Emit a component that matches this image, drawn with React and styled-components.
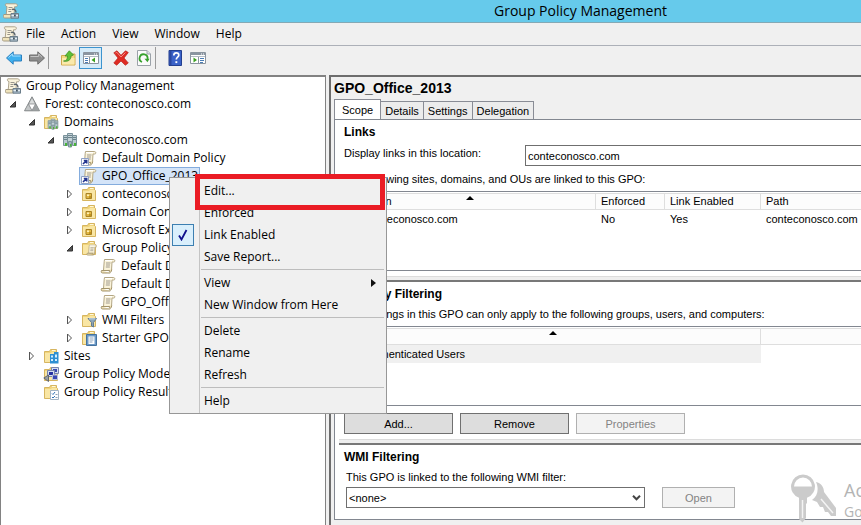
import React from 'react';
import styled, { createGlobalStyle } from 'styled-components';

const GlobalStyle = createGlobalStyle`
  * { box-sizing: border-box; }
  body { margin: 0; background: #f0f0f0; overflow: hidden; }
  button, select { font: inherit; color: inherit; margin: 0; }
`;

const ui = `"Open Sans", "Noto Sans", sans-serif`;
const classic = `"Liberation Sans", Arial, sans-serif`;

/* ---------- icons ---------- */

const Icon = ({ children, size = 16 }) => (
  <svg width={size} height={size} viewBox="0 0 16 16" aria-hidden="true">{children}</svg>
);

const scrollShape = (
  <>
    <path d="M4.500 1.500h9c1.600 0 1.800 2.500.2 2.500h-1.700l-.5 8.500H3.500l.7-9z" fill="#faf3da" stroke="#b3a684" />
    <path d="M1.500 12.500h8c-.5 2 1 2.500 1.800.8l.4-1.800M1.500 12.500c-.8 2 .2 2.500 1.200 2.500h7.500" fill="#efe0b4" stroke="#a3946c" />
    <path d="M6 5h4.500M6 7h4M5.800 9h4" stroke="#a19b90" />
    <path d="M5 2.500h7" stroke="#fff" />
  </>
);

const folderShape = (
  <>
    <path d="M1.500 3.500h5l1-2h6v3h1v10h-13z" fill="#f0d47c" stroke="#d6b560" />
    <path d="M2 5h6l1-1h5v10H2z" fill="#f9e6a4" />
    <path d="M9 2.500h3.500" stroke="#fff8dc" />
  </>
);

const ScrollIcon = () => <Icon>{scrollShape}</Icon>;

const ConsoleIcon = () => (
  <Icon>
    <path d="M2.800.8h10c2 0 2 3 .2 3h-1.500l-.5 8H3.200l.8-8.300C2.300 3.500 2 1.500 2.800.8z" fill="#faf3dc" stroke="#a49a82" strokeWidth=".9" />
    <path d="M5.500 4.500h4M5.500 6.500h3M5.300 8.500h3" stroke="#99958c" />
    <path d="M.8 11.500h7.500v3.500h-7c-1-.5-1-2.500-.5-3.500z" fill="#efe3bb" stroke="#a49a82" />
    <path d="M9 6.500c2.500-1 4 .8 4 3" fill="none" stroke="#59636b" strokeWidth="1.400" />
    <path d="M8 10.500h7.500v4.700H8z" fill="#a5b7c4" stroke="#6b7d8a" />
    <path d="M8.500 12.500h6.500" stroke="#e6eef3" />
    <path d="M11 11.500h1.800v2H11z" fill="#465560" />
  </Icon>
);

const LinkIcon = () => (
  <Icon>
    {scrollShape}
    <path d="M.5 8.500h7v7h-7z" fill="#fff" stroke="#8fa0c4" />
    <path d="M2 14l3-3M2.800 10.500h2.900v2.900" fill="none" stroke="#22348f" strokeWidth="1.600" />
  </Icon>
);

const ForestIcon = () => (
  <Icon>
    <path d="M8 .8l7.500 14H.5z" fill="#a9acad" stroke="#85898b" />
    <path d="M8 2.500L5 8h6z" fill="#d9dbdb" />
    <path d="M4.200 8.800L1.500 14h5.700z" fill="#c3c6c7" />
    <path d="M11.800 8.800L14.500 14H8.800z" fill="#9da1a3" />
    <path d="M4.500 8h7L8 14.500z" fill="#fff" stroke="#7c8082" strokeWidth=".7" />
  </Icon>
);

const servers = (
  <>
    <path d="M5.500 1.500h5v9h-5z" fill="#c5d3d8" stroke="#7b929b" />
    <path d="M1.500 3.500h4v10h-4zM10.500 3.500h4v10h-4z" fill="#b9cad0" stroke="#7b929b" />
    <path d="M6 3.500h4M6 5.500h4M2 5.500h3M2 7.500h3M11 5.500h3M11 7.500h3" stroke="#6b838c" />
    <path d="M6.500 9.500h3v5.500h-3z" fill="#a2b5bc" stroke="#7b929b" />
    <path d="M3 11h2v3H3zM12 11h2v3h-2zM8 12h1.500v2.500H8z" fill="#49b33a" />
  </>
);

const DomainIcon = () => <Icon>{servers}</Icon>;

const DomainsIcon = () => (
  <Icon>
    {folderShape}
    <g transform="translate(4 4) scale(.75)">{servers}</g>
  </Icon>
);

const OuIcon = () => (
  <Icon>
    {folderShape}
    <path d="M5 7.500h5.500v5H5z" fill="#e2b843" stroke="#a98224" />
    <path d="M6 8.500h2v1.500H6z" fill="#fff1b8" />
    <path d="M8 10h2v2H8z" fill="#c0921f" />
  </Icon>
);

const ObjectsIcon = () => (
  <Icon>
    {folderShape}
    <g transform="translate(5 4) scale(.74)">{scrollShape}</g>
  </Icon>
);

const WmiIcon = () => (
  <Icon>
    {folderShape}
    <path d="M7 6.500h8.500l-3 4v4.500l-2-1v-3.500z" fill="#8ba5ba" stroke="#657c8f" />
    <path d="M8 6.800h6.500" stroke="#cfe0ec" />
  </Icon>
);

const StarterIcon = () => (
  <Icon>
    {folderShape}
    <path d="M5.500 4.500h10v11h-10z" fill="#6c99c6" stroke="#44729f" />
    <path d="M7.500 6.500h6v7.500h-6z" fill="#fff" />
    <path d="M8.500 8h4M8.500 10h4M8.500 12h3" stroke="#8aa2bc" />
  </Icon>
);

const SitesIcon = () => (
  <Icon>
    {folderShape}
    <path d="M7 6h4V4h4.500v11.500H7z" fill="#2e8fd2" />
    <path d="M8 7.500h2v2H8zM12 6.500h2v3h-2zM8 11h2v2H8zM12 11h2v2h-2z" fill="#d4efff" />
  </Icon>
);

const ModelIcon = () => (
  <Icon>
    {folderShape}
    <path d="M8.500 1.500h7v6h-7z" fill="#d5def0" stroke="#7785ae" />
    <path d="M10 3h4v3h-4z" fill="#3947b2" />
    <path d="M4.500 4.500h7v6h-7z" fill="#d5def0" stroke="#7785ae" />
    <path d="M6 6h4v3H6z" fill="#2531a0" />
    <path d="M9.500 9h5v4.500h-5z" fill="#3947b2" stroke="#b9c3dc" />
    <path d="M.8 12l4.700-3v6.500z" fill="#9a9fa4" stroke="#64696e" />
  </Icon>
);

const ResultsIcon = () => (
  <Icon>
    {folderShape}
    <path d="M7.500 6.500h8v9h-8z" fill="#fff" stroke="#a3b5c5" />
    <path d="M9 9.500l1 1 2-2.500M9 13l1 1 2-2" fill="none" stroke="#3273b5" />
    <path d="M12.500 10.500h2M12.500 13.500h2" stroke="#8ca0b2" />
  </Icon>
);

const BackIcon = () => (
  <Icon>
    <path d="M.5 8l6.700-6.200V5h8.300v6H7.200v3.200z" fill="#3fb0ee" stroke="#2a7fbf" />
    <path d="M2.500 7.500L6.300 4v2h8.200" fill="none" stroke="#a6e0ff" />
  </Icon>
);

const ForwardIcon = () => (
  <Icon>
    <path d="M15.500 8L8.800 1.800V5H.5v6h8.300v3.200z" fill="#8d8d8d" stroke="#6c6c6c" />
    <path d="M1.500 6.500h8.200V4l3.300 3.300" fill="none" stroke="#c4c4c4" />
  </Icon>
);

const UpIcon = () => (
  <Icon>
    <path d="M1.500 5.500h5l1-1.500h7.500v11H1.500z" fill="#f4d980" stroke="#cfa94f" />
    <path d="M2 8h12.500v6.500H2z" fill="#fae9ab" />
    <path d="M3.500 11c3 0 4-2 4-5H5L9.300.8 13.500 5 11 6c0 4-3 6-7.500 5z" fill="#5ec136" stroke="#3f8f27" strokeWidth=".8" />
  </Icon>
);

const PaneIcon = ({ flip }) => (
  <Icon>
    <path d="M.5 2.500h15v11H.5z" fill="#fff" stroke="#8b959f" />
    <path d="M1 3h14v2H1z" fill="#8a95a0" />
    <path d="M11 4h1M13 4h1" stroke="#fff" />
    <path d="M1 6.500h14" stroke="#b4bcc4" />
    <path d={flip ? 'M8.500 7v6' : 'M6.500 7v6'} stroke="#8b959f" />
    <path d={flip ? 'M10 8.500h4M10 10.500h4M10 12.500h3' : 'M2 8.500h3M2 10.500h3M2 12.500h3'} stroke="#4b7db5" />
    <path d={flip ? 'M3.500 7.500l3.500 2.500-3.500 2.500z' : 'M12 7.500L8.500 10l3.500 2.500z'} fill="#3aa01f" />
  </Icon>
);

const DeleteIcon = () => (
  <Icon>
    <path d="M.8 2.800L4 .8 8 5.300 12.500.8l2.800 1.700L11 8l4.300 5-3 2.300L8 11l-4.300 4.200L.8 13 5 8z" fill="#df2b23" stroke="#b9241c" strokeWidth=".7" />
    <path d="M2.500 3l1.300-.7L8 7l4.500-4.500" fill="none" stroke="#f58c84" />
  </Icon>
);

const RefreshIcon = () => (
  <Icon>
    <path d="M1.500.5h9.500l3.500 3.500v11.500h-13z" fill="#fbfbfb" stroke="#9ba2a9" />
    <path d="M11 .5V4h3.500" fill="#dfe5ea" stroke="#9ba2a9" />
    <path d="M6 12A4 4 0 1 1 11.500 9" fill="none" stroke="#38a22e" strokeWidth="1.800" />
    <path d="M8.500 8.800h5l-2 3.500z" fill="#38a22e" />
  </Icon>
);

const HelpIcon = () => (
  <Icon>
    <path d="M2 .5h12.500v15H2z" fill="#3a62c8" stroke="#233f8f" />
    <path d="M2.500 1h2v14h-2z" fill="#2a479f" />
    <path d="M6.800 5.500c0-3.500 5-3.200 5-.3 0 2-2.500 2-2.500 4.300" fill="none" stroke="#fff" strokeWidth="1.700" />
    <path d="M8.400 11.200h1.900v1.900H8.400z" fill="#fff" />
  </Icon>
);

const Twisty = ({ open }) => (
  <svg width="8" height="10" viewBox="0 0 8 10" aria-hidden="true">
    {open
      ? <path d="M6.500 2.500v5.500H1z" fill="#555" stroke="#333" />
      : <path d="M1.500 1v8L5.500 5z" fill="#fff" stroke="#555" />}
  </svg>
);

const SortMark = () => (
  <svg width="8" height="4" viewBox="0 0 8 4" aria-hidden="true"><path d="M0 4l4-4 4 4z" fill="#000" /></svg>
);

/* ---------- window chrome ---------- */

const Window = styled.div`
  position: relative;
  display: flex;
  flex-direction: column;
  min-height: 100vh;
  overflow: hidden;
  background: #f0f0f0;
  color: #000;
  font: 12px/18px ${ui};
`;

const TitleBar = styled.header`
  display: grid;
  grid-template-columns: 300px 1fr;
  align-items: center;
  height: 23px;
  padding: 0 3px;
  background: #66caeb;
  border-bottom: 1px solid #84a9b5;
  svg { display: block; }
`;

const WindowTitle = styled.h1`
  margin: 0;
  font-size: 14px;
  font-weight: 400;
  line-height: 20px;
  text-align: center;
`;

const MenuBar = styled.nav`
  display: flex;
  align-items: center;
  height: 23px;
  padding-left: 2px;
  border-bottom: 1px solid #acb0b8;
`;

const MenuButton = styled.button`
  padding: 0 8px;
  border: 0;
  background: none;
`;

const Toolbar = styled.div`
  display: flex;
  align-items: center;
  height: 29px;
  padding: 0 2px 6px;
`;

const ToolButton = styled.button`
  display: grid;
  place-items: center;
  width: 23px;
  height: 22px;
  padding: 0;
  border: 1px solid ${p => (p.$on ? '#3c94cf' : 'transparent')};
  background: ${p => (p.$on ? '#d5ebf8' : 'none')};
`;

const ToolRule = styled.span`
  width: 1px;
  height: 22px;
  margin-right: 7px;
  background: #9b9b9b;
`;

const ToolGap = styled.span`
  width: 7px;
`;

const Body = styled.main`
  flex: 1;
  display: grid;
  grid-template-columns: 326px minmax(0, 1fr);
  column-gap: 3px;
`;

/* ---------- tree ---------- */

const TreePane = styled.ul`
  margin: 0;
  padding: 0 0 0 3px;
  list-style: none;
  overflow: hidden;
  background: #fff;
  border: solid #828282;
  border-width: 2px 1px 0 1px;
`;

const TreeRow = styled.li`
  display: flex;
  align-items: center;
  height: 18px;
  padding-left: ${p => p.$depth * 19}px;
  white-space: nowrap;
`;

const TwistyBox = styled.span`
  display: flex;
  width: ${p => (p.$root ? 0 : 14)}px;
  margin-left: ${p => (p.$root ? 0 : -14)}px;
`;

const TreeLabel = styled.span`
  display: flex;
  align-items: center;
  gap: 5px;
  height: 18px;
  padding: 0 1px;
  margin-left: -1px;
  border: 1px solid ${p => (p.$selected ? '#84acdd' : 'transparent')};
  background: ${p => (p.$selected ? '#d4e4f8' : 'none')};
`;

const tree = [
  { depth: 0, icon: ConsoleIcon, text: 'Group Policy Management' },
  { depth: 1, icon: ForestIcon, text: 'Forest: conteconosco.com', open: true },
  { depth: 2, icon: DomainsIcon, text: 'Domains', open: true },
  { depth: 3, icon: DomainIcon, text: 'conteconosco.com', open: true },
  { depth: 4, icon: LinkIcon, text: 'Default Domain Policy' },
  { depth: 4, icon: LinkIcon, text: 'GPO_Office_2013', selected: true },
  { depth: 4, icon: OuIcon, text: 'conteconosco', open: false },
  { depth: 4, icon: OuIcon, text: 'Domain Controllers', open: false },
  { depth: 4, icon: OuIcon, text: 'Microsoft Exchange', open: false },
  { depth: 4, icon: ObjectsIcon, text: 'Group Policy Objects', open: true },
  { depth: 5, icon: ScrollIcon, text: 'Default Domain' },
  { depth: 5, icon: ScrollIcon, text: 'Default Domain' },
  { depth: 5, icon: ScrollIcon, text: 'GPO_Office_2013' },
  { depth: 4, icon: WmiIcon, text: 'WMI Filters', open: false },
  { depth: 4, icon: StarterIcon, text: 'Starter GPOs', open: false },
  { depth: 2, icon: SitesIcon, text: 'Sites', open: false },
  { depth: 2, icon: ModelIcon, text: 'Group Policy Modeling' },
  { depth: 2, icon: ResultsIcon, text: 'Group Policy Results' },
];

const Tree = () => (
  <TreePane role="tree">
    {tree.map(({ depth, icon: NodeIcon, text, open, selected }, i) => (
      <TreeRow key={i} role="treeitem" aria-selected={!!selected} $depth={depth}>
        <TwistyBox $root={depth === 0}>
          {open !== undefined && <Twisty open={open} />}
        </TwistyBox>
        <TreeLabel $selected={selected}><NodeIcon />{text}</TreeLabel>
      </TreeRow>
    ))}
  </TreePane>
);

/* ---------- details ---------- */

const DetailPane = styled.section`
  display: flex;
  flex-direction: column;
  padding: 2px 0 3px 3px;
  border: solid #6d6d6d;
  border-width: 2px 0 0 2px;
  font: 11px/16px ${classic};
`;

const DetailTitle = styled.h2`
  margin: 0 0 2px;
  font-size: 14px;
  line-height: 18px;
`;

const Tabs = styled.div`
  display: flex;
  align-items: flex-end;
`;

const Tab = styled.button`
  height: ${p => (p.$active ? 21 : 18)}px;
  margin-bottom: ${p => (p.$active ? -1 : 0)}px;
  padding: 0 ${p => (p.$active ? 7 : 4)}px;
  border: 1px solid #898c95;
  border-width: 1px 1px 0 ${p => (p.$active ? 1 : 0)}px;
  background: ${p => (p.$active ? '#fff' : '#ececec')};
`;

const TabPanel = styled.div`
  background: #fff;
  border: solid #828790;
  border-width: 1px 0 1px 1px;
`;

const Section = styled.section`
  padding: 4px 0 5px 9px;
`;

const SectionRule = styled.hr`
  height: 6px;
  margin: 0 0 0 4px;
  border: 0;
  border-top: 1px solid #dcdcdc;
  border-bottom: 2px solid #787878;
  background: #eee;
`;

const SectionTitle = styled.h3`
  margin: 0 0 4px;
  font-size: 12px;
  line-height: 16px;
`;

const Note = styled.p`
  margin: 0 0 4px;
`;

const FieldRow = styled.div`
  display: grid;
  grid-template-columns: 181px minmax(0, 1fr);
  padding-top: 1px;
  margin-bottom: 5px;
`;

const WmiField = styled.div`
  display: grid;
  grid-template-columns: minmax(0, 299px) 73px;
  gap: 2px 17px;
  padding: 0 0 6px 2px;
  label { grid-column: 1 / -1; }
`;

const Select = styled.select`
  appearance: none;
  width: 100%;
  height: 21px;
  padding: 0 18px 0 2px;
  border: 1px solid #6f6f6f;
  border-right-width: ${p => (p.$bleed ? 0 : 1)}px;
  border-radius: 0;
  background: #fff;
`;

const SelectBox = styled.div`
  position: relative;
  svg {
    position: absolute;
    top: 8px;
    right: 4px;
    pointer-events: none;
  }
`;

const ListBox = styled.div`
  height: 80px;
  padding-top: 1px;
  background: #fff;
  border: solid #828790;
  border-width: 1px 0 1px 1px;
`;

const ListTable = styled.table`
  width: 100%;
  table-layout: fixed;
  border-collapse: separate;
  border-spacing: 0;
  th {
    height: 17px;
    padding: 0 5px;
    background: #fcfcfc;
    border: solid #dedede;
    border-width: 1px 1px 1px 0;
    font-weight: 400;
    text-align: left;
    line-height: 15px;
  }
  th:last-child { border-right: 0; }
  td {
    height: 18px;
    padding: 0 5px;
    line-height: 18px;
  }
`;

const Column = styled.col`
  width: ${p => p.$width}px;
`;

const SortedHead = styled.span`
  display: grid;
  grid-template-columns: 1fr auto 1fr;
  height: 15px;
  svg { margin-top: 2px; }
`;

const NameCell = styled.td`
  background: ${p => (p.$shaded ? '#f0f0f0' : 'none')};
  span { padding-left: 16px; }
`;

const ButtonRow = styled.div`
  display: flex;
  gap: 7px;
  margin-top: 7px;
`;

const PushButton = styled.button`
  width: ${p => (p.$small ? 73 : 109)}px;
  height: 21px;
  padding: 0;
  border: 1px solid #707070;
  background: #dddddd;
  &:disabled {
    border-color: #b0b0b0;
    background: #f3f3f3;
    color: #838383;
  }
`;

const Details = () => (
  <DetailPane>
    <DetailTitle>GPO_Office_2013</DetailTitle>
    <Tabs role="tablist">
      <Tab role="tab" aria-selected="true" $active>Scope</Tab>
      <Tab role="tab">Details</Tab>
      <Tab role="tab">Settings</Tab>
      <Tab role="tab">Delegation</Tab>
    </Tabs>
    <TabPanel role="tabpanel">
      <Section>
        <SectionTitle>Links</SectionTitle>
        <FieldRow>
          <label htmlFor="location">Display links in this location:</label>
          <Select id="location" $bleed><option>conteconosco.com</option></Select>
        </FieldRow>
        <Note>The following sites, domains, and OUs are linked to this GPO:</Note>
        <ListBox>
          <ListTable>
            <colgroup>
              <Column $width={251} />
              <Column $width={69} />
              <Column $width={96} />
              <col />
            </colgroup>
            <thead>
              <tr>
                <th><SortedHead>Location<SortMark /></SortedHead></th>
                <th>Enforced</th>
                <th>Link Enabled</th>
                <th>Path</th>
              </tr>
            </thead>
            <tbody>
              <tr>
                <NameCell><span>conteconosco.com</span></NameCell>
                <td>No</td>
                <td>Yes</td>
                <td>conteconosco.com</td>
              </tr>
            </tbody>
          </ListTable>
        </ListBox>
      </Section>
      <SectionRule />
      <Section>
        <SectionTitle>Security Filtering</SectionTitle>
        <Note>The settings in this GPO can only apply to the following groups, users, and computers:</Note>
        <ListBox>
          <ListTable>
            <colgroup>
              <Column $width={416} />
              <col />
            </colgroup>
            <thead>
              <tr>
                <th><SortedHead><span /><SortMark /></SortedHead></th>
                <th />
              </tr>
            </thead>
            <tbody>
              <tr>
                <NameCell $shaded><span>Authenticated Users</span></NameCell>
                <td />
              </tr>
            </tbody>
          </ListTable>
        </ListBox>
        <ButtonRow>
          <PushButton>Add...</PushButton>
          <PushButton>Remove</PushButton>
          <PushButton disabled>Properties</PushButton>
        </ButtonRow>
      </Section>
      <SectionRule />
      <Section>
        <SectionTitle>WMI Filtering</SectionTitle>
        <WmiField>
          <label htmlFor="wmi">This GPO is linked to the following WMI filter:</label>
          <SelectBox>
            <Select id="wmi"><option>&lt;none&gt;</option></Select>
            <svg width="9" height="6" viewBox="0 0 9 6" aria-hidden="true">
              <path d="M1 .8l3.500 3.500L8 .8" fill="none" stroke="#444" strokeWidth="2" />
            </svg>
          </SelectBox>
          <PushButton disabled $small>Open</PushButton>
        </WmiField>
      </Section>
    </TabPanel>
  </DetailPane>
);

/* ---------- context menu ---------- */

const Menu = styled.div`
  position: absolute;
  top: 177px;
  left: 169px;
  width: 218px;
  padding: 2px 1px 1px;
  border: 1px solid #979797;
  background: linear-gradient(#c4c4c4, #c4c4c4) 29px 1px / 1px 100% no-repeat #f0f0f0;
`;

const MenuItem = styled.button`
  display: grid;
  grid-template-columns: 33px 1fr 14px;
  align-items: center;
  width: 100%;
  height: 22px;
  padding: 0;
  border: 0;
  background: none;
  text-align: left;
`;

const MenuRule = styled.hr`
  height: 1px;
  margin: 1px 1px 2px 30px;
  border: 0;
  background: #bdbdbd;
`;

const Check = styled.span`
  display: grid;
  place-items: center;
  width: 22px;
  height: 22px;
  margin-left: 1px;
  border: 1px solid #3c7fb1;
  background: #d9effc;
`;

const Highlight = styled.div`
  position: absolute;
  top: 174px;
  left: 195px;
  width: 190px;
  height: 36px;
  border: 5px solid #ea1c24;
  pointer-events: none;
`;

const menuItems = [
  { text: 'Edit...' },
  { text: 'Enforced' },
  { text: 'Link Enabled', checked: true },
  { text: 'Save Report...' },
  null,
  { text: 'View', submenu: true },
  { text: 'New Window from Here' },
  null,
  { text: 'Delete' },
  { text: 'Rename' },
  { text: 'Refresh' },
  null,
  { text: 'Help' },
];

const ContextMenu = () => (
  <Menu role="menu">
    {menuItems.map((item, i) => (item ? (
      <MenuItem key={i} role="menuitem">
        {item.checked ? (
          <Check>
            <svg width="12" height="12" viewBox="0 0 12 12" aria-hidden="true">
              <path d="M2 6.500l2.500 4L9.500 1" fill="none" stroke="#10108c" strokeWidth="1.800" />
            </svg>
          </Check>
        ) : <span />}
        {item.text}
        {item.submenu && (
          <svg width="5" height="8" viewBox="0 0 5 8" aria-hidden="true"><path d="M0 0l5 4-5 4z" fill="#111" /></svg>
        )}
      </MenuItem>
    ) : <MenuRule key={i} />))}
  </Menu>
);

/* ---------- activation watermark ---------- */

const Watermark = styled.div`
  position: absolute;
  right: 0;
  bottom: 0;
  display: flex;
  gap: 6px;
  width: 71px;
  overflow: hidden;
  white-space: nowrap;
  color: #b4b4b4;
  font-size: 14px;
  line-height: 20px;
  pointer-events: none;
  svg { flex: none; }
`;

const WatermarkTitle = styled.div`
  margin-top: 4px;
  font-size: 18px;
  line-height: 24px;
`;

const KeysIcon = () => (
  <svg width="48" height="51" viewBox="0 0 48 51" aria-hidden="true">
    <g fill="#cbcbcb">
      <path d="M26 8c5 1 8 5 8 10l12 16v8h-5l-3-4h-3l-2-5h-3l-3-5-5-2c6-4 7-12 4-18z" />
      <path
        fillRule="evenodd"
        d="M13 .5a12 12 0 0 1 4 23.300V29l-1 1v14l-3.500 4.500L9 45V23.800A12 12 0 0 1 13 .5zM13 3.500a9 9 0 0 0-9 9h18a9 9 0 0 0-9-9z"
      />
    </g>
    <path d="M12.500 26v18M31 25l12 14" stroke="#f4f4f4" strokeWidth="1.500" />
  </svg>
);

const App = () => (
  <>
    <GlobalStyle />
    <Window>
      <TitleBar>
        <ConsoleIcon />
        <WindowTitle>Group Policy Management</WindowTitle>
      </TitleBar>
      <MenuBar>
        <ConsoleIcon />
        <MenuButton>File</MenuButton>
        <MenuButton>Action</MenuButton>
        <MenuButton>View</MenuButton>
        <MenuButton>Window</MenuButton>
        <MenuButton>Help</MenuButton>
      </MenuBar>
      <Toolbar>
        <ToolButton aria-label="Back"><BackIcon /></ToolButton>
        <ToolButton aria-label="Forward"><ForwardIcon /></ToolButton>
        <ToolRule />
        <ToolButton aria-label="Up one level"><UpIcon /></ToolButton>
        <ToolButton aria-label="Show console tree" $on><PaneIcon /></ToolButton>
        <ToolGap />
        <ToolButton aria-label="Delete"><DeleteIcon /></ToolButton>
        <ToolButton aria-label="Refresh"><RefreshIcon /></ToolButton>
        <ToolRule />
        <ToolButton aria-label="Help"><HelpIcon /></ToolButton>
        <ToolButton aria-label="Show action pane"><PaneIcon flip /></ToolButton>
      </Toolbar>
      <Body>
        <Tree />
        <Details />
      </Body>
      <ContextMenu />
      <Highlight />
      <Watermark>
        <KeysIcon />
        <div>
          <WatermarkTitle>Ac</WatermarkTitle>
          Go
        </div>
      </Watermark>
    </Window>
  </>
);

export default App;
